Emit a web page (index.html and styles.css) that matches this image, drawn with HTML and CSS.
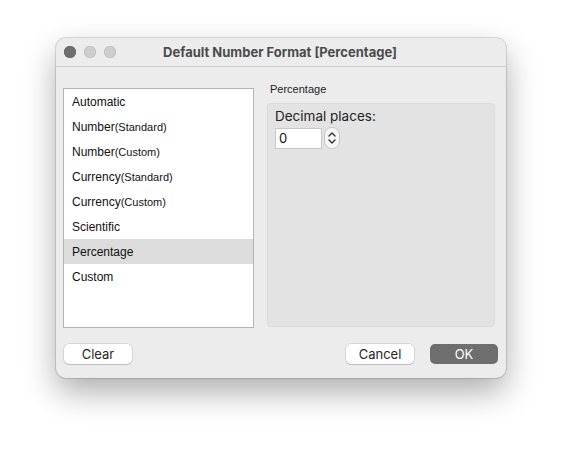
FILE: index.html
```html
<!DOCTYPE html>
<html>
<head>
<meta charset="utf-8">
<link rel="stylesheet" href="styles.css">
</head>
<body>
<div class="window">
  <div class="titlebar">
    <div class="lights">
      <span class="light close"></span>
      <span class="light"></span>
      <span class="light"></span>
    </div>
    <div class="title">Default Number Format [Percentage]</div>
  </div>
  <div class="main">
    <ul class="list">
      <li>Automatic</li>
      <li>Number<small>(Standard)</small></li>
      <li>Number<small>(Custom)</small></li>
      <li>Currency<small>(Standard)</small></li>
      <li>Currency<small>(Custom)</small></li>
      <li>Scientific</li>
      <li class="selected">Percentage</li>
      <li>Custom</li>
    </ul>
    <div class="panel">
      <div class="panel-label">Percentage</div>
      <div class="group">
        <div class="field-label">Decimal places:</div>
        <div class="field-row">
          <div class="input">0</div>
          <svg class="stepper" width="16" height="22" viewBox="0 0 16 22">
            <rect x="0.5" y="0.5" width="15" height="21" rx="7" fill="#f6f6f6" stroke="#c4c4c4"/>
            <path d="M5 9 L8 6 L11 9" fill="none" stroke="#333" stroke-width="1.4" stroke-linecap="round" stroke-linejoin="round"/>
            <path d="M5 13 L8 16 L11 13" fill="none" stroke="#333" stroke-width="1.4" stroke-linecap="round" stroke-linejoin="round"/>
          </svg>
        </div>
      </div>
    </div>
  </div>
  <div class="footer">
    <button class="btn">Clear</button>
    <div class="spacer"></div>
    <button class="btn">Cancel</button>
    <button class="btn primary">OK</button>
  </div>
</div>
</body>
</html>
```
FILE: styles.css
```css
* { box-sizing: border-box; }
html, body { margin: 0; padding: 0; background: #ffffff; }
body {
  padding: 38px 0 80px 56px;
  font-family: "Liberation Sans", Arial, sans-serif;
  color: #1e1e1e;
}
.window {
  width: 450px;
  height: 340px;
  background: #ececec;
  border-radius: 10px;
  box-shadow: 0 0 0 1px rgba(0,0,0,0.13), 0 14px 32px rgba(0,0,0,0.32);
  display: flex;
  flex-direction: column;
}
.titlebar {
  height: 29px;
  border-bottom: 1px solid #cfcfcf;
  position: relative;
  display: flex;
  align-items: center;
  justify-content: center;
  flex: none;
}
.lights {
  position: absolute;
  left: 8px;
  top: 8px;
  display: flex;
  gap: 8px;
}
.light {
  width: 12px;
  height: 12px;
  border-radius: 50%;
  background: #cdcdcd;
  box-shadow: inset 0 0 0 0.5px #b5b5b5;
}
.light.close { background: #6f6f6f; box-shadow: inset 0 0 0 0.5px #5a5a5a; }
.title {
  font-family: "Inter", "Liberation Sans", sans-serif;
  font-weight: 700;
  font-size: 13px;
  color: #4b4b4b;
  margin-left: -2px;
}
.main {
  display: flex;
  gap: 13px;
  padding: 21px 11px 0 7px;
  height: 261px;
  flex: none;
}
.list {
  list-style: none;
  margin: 0;
  padding: 0;
  width: 191px;
  height: 240px;
  background: #ffffff;
  border: 1px solid #b4b4b4;
}
.list li {
  height: 25px;
  line-height: 23px;
  padding: 2px 0 0 8px;
  font-size: 12px;
  color: #111;
}
.list li small { font-size: 11px; }
.list li.selected { background: #dcdcdc; }
.panel {
  flex: 1;
  display: flex;
  flex-direction: column;
}
.panel-label {
  font-size: 11px;
  height: 19px;
  line-height: 11px;
  margin-top: -4px;
  padding-left: 3px;
  color: #222;
}
.group {
  background: #e3e3e3;
  border: 1px solid #dadada;
  border-radius: 4px;
  height: 224px;
  flex: none;
  padding: 4px 7px;
}
.field-label {
  font-family: "Inter", "Liberation Sans", sans-serif;
  font-size: 13.5px;
  color: #222;
  line-height: 16px;
}
.field-row {
  display: flex;
  align-items: center;
  gap: 2px;
  margin-top: 3px;
}
.input {
  width: 47px;
  height: 21px;
  background: #fff;
  border: 1px solid #c8c8c8;
  font-family: "Inter", "Liberation Sans", sans-serif;
  font-size: 13px;
  line-height: 19px;
  padding-left: 3px;
  color: #111;
}
.footer {
  display: flex;
  align-items: center;
  padding: 16px 8px 0 8px;
  gap: 16px;
}
.spacer { flex: 1; }
.btn {
  width: 68px;
  height: 20px;
  border: none;
  border-radius: 5px;
  background: #ffffff;
  box-shadow: 0 0 0 0.5px rgba(0,0,0,0.18), 0 1px 1px rgba(0,0,0,0.12);
  font-family: "Inter", "Liberation Sans", sans-serif;
  font-size: 13px;
  color: #262626;
  padding: 0;
  line-height: 20px;
}
.btn.primary {
  background: #6e6e6e;
  color: #ffffff;
  box-shadow: none;
}
```
